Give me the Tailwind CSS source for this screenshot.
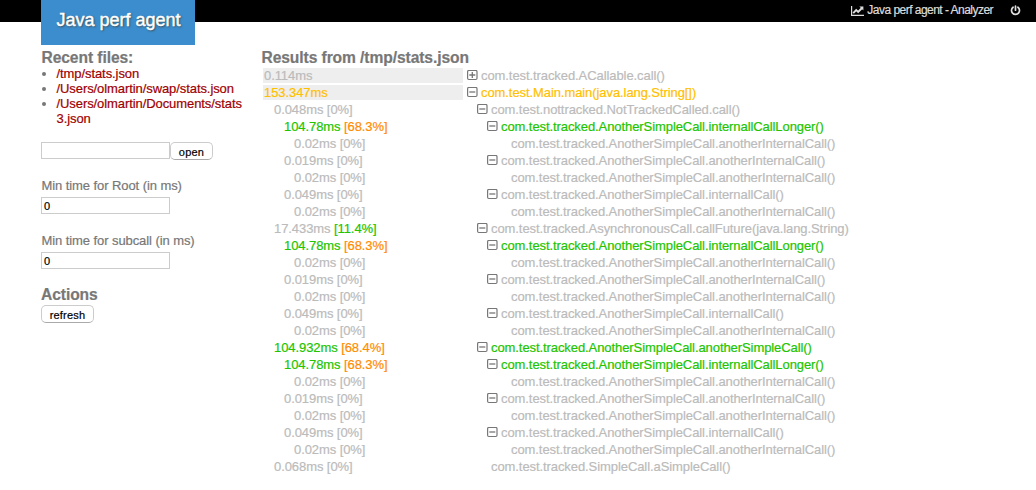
<!DOCTYPE html>
<html lang="en">
<head>
<meta charset="utf-8">
<title>Java perf agent - Analyzer</title>
<script src="https://cdn.jsdelivr.net/npm/@tailwindcss/browser@4"></script>
</head>
<body class="h-[490px] overflow-hidden bg-white font-['Liberation_Sans',Arial,sans-serif] text-[13px] leading-[15px] tracking-[-0.08px] text-[#777] [-webkit-text-stroke:0.2px]">
<header class="flex h-[22px] items-start justify-between bg-black pl-[41px] pr-[15px]">
  <h1 class="h-[45px] w-[154px] shrink-0 bg-[#3b8dcd] pl-[15.5px] pt-[9px] text-[18px] leading-[22px] tracking-normal text-white [-webkit-text-stroke:0.4px] [text-shadow:1px_1px_2px_#444]">Java perf agent</h1>
  <div class="flex h-[21px] items-center text-[12px] tracking-[-0.53px] text-[#ddd]">
    <svg class="mr-[3px] h-[10px] w-[13px]" viewBox="0 0 13 10" fill="none" stroke="#ddd"><path d="M.6 0v9.3H13" stroke-width="1.2"/><path d="M2.2 7.2 5.2 4l2 2 3.8-4" stroke-width="1.9"/><path d="M8.4.4h4v4z" fill="#ddd" stroke="none"/></svg>
    <span>Java perf agent - Analyzer</span>
    <svg class="ml-[17px] h-[11px] w-[11px]" viewBox="0 0 11 11" fill="none" stroke="#ddd" stroke-width="1.7" stroke-linecap="round"><path d="M3.1 2.2a4 4 0 1 0 4.8 0M5.5 1v4.2"/></svg>
  </div>
</header>
<div class="flex pl-[41px] pt-[27px]">
  <aside class="w-[220px] shrink-0">
    <h2 class="h-[17px] pl-[0.5px] text-[15.6px] leading-[17px] font-bold">Recent files:</h2>
    <ul class="list-disc pl-[15.5px] text-[#a00000] marker:text-[#777]">
      <li>/tmp/stats.json</li>
      <li>/Users/olmartin/swap/stats.json</li>
      <li>/Users/olmartin/Documents/stats<br>3.json</li>
    </ul>
    <form class="mt-[16px]">
      <div class="flex items-start">
        <input class="h-[17px] w-[129px] border border-[#ccc]">
        <button type="button" class="h-[18px] w-[43px] rounded-[5px] border border-[#ccc] border-b-[#aaa] pt-px text-[11px] leading-[16px] tracking-[0.2px] text-black">open</button>
      </div>
      <label class="mt-[18px] block h-[19px] pl-[0.5px]">Min time for Root (in ms)</label>
      <input value="0" class="block h-[17px] w-[129px] border border-[#ccc] px-[2px] pt-px text-[11px] text-black">
      <label class="mt-[19px] block h-[19px] pl-[0.5px]">Min time for subcall (in ms)</label>
      <input value="0" class="block h-[17px] w-[129px] border border-[#ccc] px-[2px] pt-px text-[11px] text-black">
      <h2 class="mt-[17px] h-[19px] text-[15.6px] leading-[17px] font-bold">Actions</h2>
      <button type="button" class="block h-[18px] w-[53px] rounded-[5px] border border-[#ccc] border-b-[#aaa] pt-px text-[11px] leading-[16px] tracking-[0.2px] text-black">refresh</button>
    </form>
  </aside>
  <main>
    <h2 class="h-[18px] pl-[0.5px] text-[15.6px] leading-[17px] font-bold">Results from /tmp/stats.json</h2>
    <div id="rows" class="flex flex-col gap-[2px] pl-[2px] pt-px"></div>
  </main>
</div>
<script>
const P = 'com.test.tracked.AnotherSimpleCall.';
const sub = [
  [2, '104.78', '68.3', P + 'internallCallLonger()', '-'],
  [3, '0.02', '0', P + 'anotherInternalCall()', ''],
  [2, '0.019', '0', P + 'anotherInternalCall()', '-'],
  [3, '0.02', '0', P + 'anotherInternalCall()', ''],
  [2, '0.049', '0', P + 'internallCall()', '-'],
  [3, '0.02', '0', P + 'anotherInternalCall()', '']
];
const rows = [
  [0, '0.114', '', 'com.test.tracked.ACallable.call()', '+'],
  [0, '153.347', '', 'com.test.Main.main(java.lang.String[])', '-'],
  [1, '0.048', '0', 'com.test.nottracked.NotTrackedCalled.call()', '-'],
  ...sub,
  [1, '17.433', '11.4', 'com.test.tracked.AsynchronousCall.callFuture(java.lang.String)', '-'],
  ...sub,
  [1, '104.932', '68.4', P + 'anotherSimpleCall()', '-'],
  ...sub,
  [1, '0.068', '0', 'com.test.tracked.SimpleCall.aSimpleCall()', '']
];
const indent = ['pl-px', 'pl-[11px]', 'pl-[21px]', 'pl-[31px]'];
const callIndent = ['pl-[4px]', 'pl-[14px]', 'pl-[24px]', 'pl-[34px]'];
const icon = s => `<svg class="mt-[2px] mr-[3px] h-[11px] w-[11px] shrink-0" viewBox="0 0 11 11" fill="none" stroke="#777">${s ? `<rect x=".6" y=".5" width="9.4" height="9" rx="1.2" stroke-width="1.2"/><path d="M2.3 5h6${s === '+' ? 'M5.3 2v6' : ''}" stroke-width="1.3"/>` : ''}</svg>`;
document.getElementById('rows').innerHTML = rows.map(([d, t, p, name, s]) => {
  const tone = parseFloat(t) > 150 ? 'text-[#ffc000]' : parseFloat(t) > 100 ? 'text-[#22c400]' : 'text-[#bbb]';
  const pTone = p === '0' ? 'text-[#bbb]' : p === '11.4' ? 'text-[#22c400]' : 'text-[#ff8c00]';
  return `<div class="flex h-[15px] whitespace-nowrap ${tone}"><div class="w-[200px] shrink-0 ${indent[d]} ${d ? '' : 'bg-[#eee]'}">${t}ms${p ? ` <span class="${pTone}">[${p}%]</span>` : ''}</div><div class="flex ${callIndent[d]}">${icon(s)}<span>${name}</span></div></div>`;
}).join('');
</script>
</body>
</html>
